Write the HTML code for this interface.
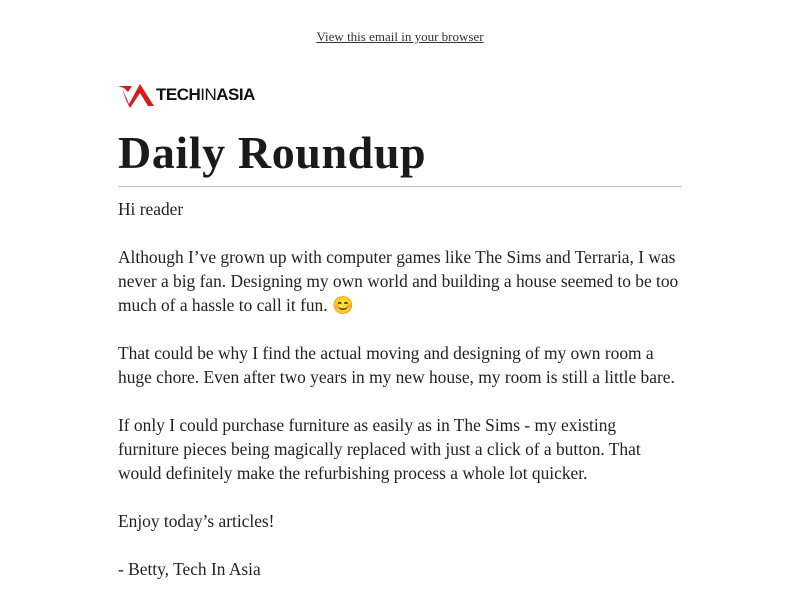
<!DOCTYPE html>
<html><head><meta charset="utf-8"><style>
body{margin:0;background:#fff;color:#222;font-family:"Liberation Serif",serif;}
.top{text-align:center;padding-top:29px;font-size:13px;height:24px;}
.top a{color:#333;text-decoration:underline;}
.wrap{position:absolute;left:118px;width:564px;top:80px;}
.txt{width:562px}
.logo{height:30px;display:flex;align-items:center;}
.logo span{font-family:"Liberation Sans",sans-serif;font-weight:bold;font-size:17px;letter-spacing:-0.5px;color:#111;margin-left:2px}
.logo span i{font-style:normal;font-weight:normal}
h1{margin:0;font-size:46px;line-height:54px;font-weight:bold;color:#1a1a1a;margin-top:16px;letter-spacing:0.6px}
hr{border:0;border-top:1px solid #bbb;margin:6px 0 0}
p{margin:0 0 24px;font-size:17.4px;line-height:24px;}
</style></head><body>
<div class="top"><a>View this email in your browser</a></div>
<div class="wrap">
<div class="logo">
<svg width="36" height="26" viewBox="0 0 36 26"><path d="M0 4 L14 4 L10 10 L6 6 Z" fill="#d71920"/><path d="M4 6 L11 22 L22 2 L36 24 L30 24 L22 11 L12 26 L8 18 Z" fill="#d71920"/></svg>
<span>TECH<i>IN</i>ASIA</span>
</div>
<h1>Daily Roundup</h1>
<hr>
<div class="txt">
<p style="margin-top:10px">Hi reader</p>
<p>Although I’ve grown up with computer games like The Sims and Terraria, I was never a big fan. Designing my own world and building a house seemed to be too much of a hassle to call it fun. 😊</p>
<p>That could be why I find the actual moving and designing of my own room a huge chore. Even after two years in my new house, my room is still a little bare.</p>
<p>If only I could purchase furniture as easily as in The Sims - my existing furniture pieces being magically replaced with just a click of a button. That would definitely make the refurbishing process a whole lot quicker.</p>
<p>Enjoy today’s articles!</p>
<p>- Betty, Tech In Asia</p>
</div>
</div>
</body></html>
